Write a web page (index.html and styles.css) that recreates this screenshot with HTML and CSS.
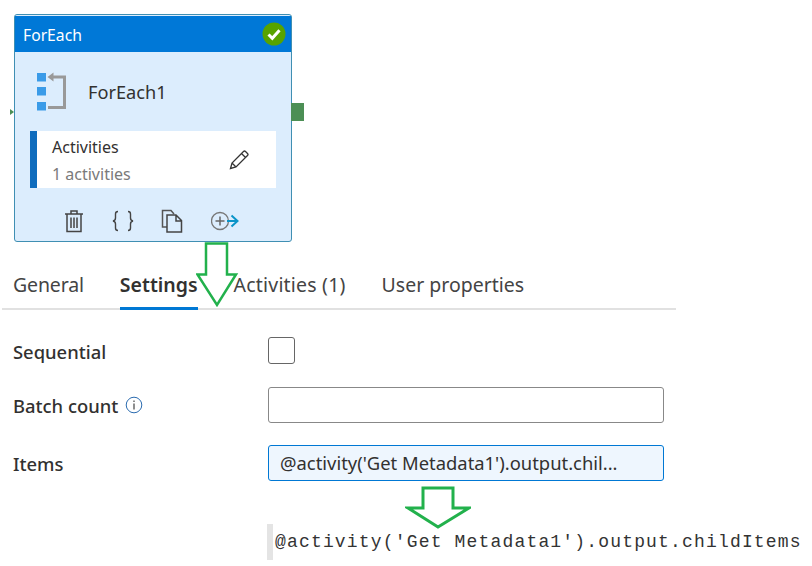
FILE: index.html
```html
<!DOCTYPE html>
<html lang="en">
<head>
    <meta charset="UTF-8">
    <meta name="viewport" content="width=device-width, initial-scale=1.0">
    <title>ForEach Settings</title>
    <link rel="stylesheet" href="styles.css">
</head>
<body>

    <div class="canvas">
        <div class="node">
            <span class="port-in"></span>
            <span class="port-out"></span>
            <div class="node-head">
                <span>ForEach</span>
                <svg class="status" width="24" height="24" viewBox="0 0 24 24">
                    <circle cx="12" cy="12" r="11.5" fill="#57a300"/>
                    <path d="M6.5 12.5l3.8 3.8 7.2-8" fill="none" stroke="#fff" stroke-width="3"/>
                </svg>
            </div>
            <div class="node-title">
                <svg width="30" height="40" viewBox="0 0 30 40">
                    <rect x="0" y="1" width="9" height="8.5" fill="#3a9be8"/>
                    <rect x="0" y="15" width="9" height="8.5" fill="#3a9be8"/>
                    <rect x="0" y="30" width="9" height="8.5" fill="#3a9be8"/>
                    <path d="M16 5H27.500V35.500H11" fill="none" stroke="#999" stroke-width="3"/>
                    <path d="M10.500 5l6-4.500v9z" fill="#999"/>
                </svg>
                <span>ForEach1</span>
            </div>
            <div class="node-panel">
                <div class="panel-text">
                    <div class="panel-name">Activities</div>
                    <div class="panel-count">1 activities</div>
                </div>
                <svg width="20" height="20" viewBox="0 0 20 20">
                    <path d="M1.500 18.500l1.500-5.500L14.500 1.500q1-1 2 0l2 2q1 1 0 2L7 17zM3 13l4 4M12.500 3.500l4 4" fill="none" stroke="#333" stroke-width="1.300"/>
                </svg>
            </div>
            <div class="node-tools">
                <svg width="20" height="24" viewBox="0 0 20 24">
                    <path d="M1 5H19M7 5V2h6v3M3 5V22.500H17V5M7 8.500V19M10 8.500V19M13 8.500V19" fill="none" stroke="#444" stroke-width="1.500"/>
                </svg>
                <svg width="22" height="24" viewBox="0 0 22 24">
                    <path d="M6 2.500q-2.500 0-2.500 2.500v4q0 2.500-2.500 3 2.500.5 2.500 3v4q0 2.500 2.500 2.500M16 2.500q2.500 0 2.500 2.500v4q0 2.500 2.500 3-2.500.5-2.500 3v4q0 2.500-2.500 2.500" fill="none" stroke="#444" stroke-width="1.400"/>
                </svg>
                <svg width="22" height="24" viewBox="0 0 22 24">
                    <path d="M6 18H1.500V1.500H10L13 5" fill="none" stroke="#555" stroke-width="1.500"/>
                    <path d="M6 6H15L20.500 11.500V23H6zM15 6v6h5.500" fill="#dcedfd" stroke="#444" stroke-width="1.500"/>
                </svg>
                <svg width="30" height="20" viewBox="1 0 30 20">
                    <circle cx="10" cy="10" r="8.500" fill="none" stroke="#777" stroke-width="1.300"/>
                    <path d="M5.500 10h9M10 5.500v9" stroke="#666" stroke-width="1.500"/>
                    <path d="M17 10H28M21.500 4.500l6 5.500-6 5.500" fill="none" stroke="#0a94c8" stroke-width="2"/>
                </svg>
            </div>
        </div>
    </div>

    <div class="tabs">
        <div class="tab">General</div>
        <div class="tab active">Settings</div>
        <div class="tab">Activities (1)</div>
        <div class="tab">User properties</div>
    </div>

    <div class="form">
        <label class="label">Sequential</label>
        <div class="checkbox"></div>
        <label class="label">Batch count
            <svg class="info" width="18" height="18" viewBox="0 0 18 18">
                <circle cx="9" cy="9" r="7.800" fill="none" stroke="#2b6cb0" stroke-width="1"/>
                <path d="M9 7.500v6M9 4.500v1.400" stroke="#444" stroke-width="1.200"/>
            </svg>
        </label>
        <div class="input"></div>
        <label class="label">Items</label>
        <div class="input filled">@activity('Get Metadata1').output.chil...</div>
    </div>

    <div class="code">@activity('Get Metadata1').output.childItems</div>

    <!-- green arrows drawn over the screenshot -->
    <svg class="arrow arrow-tabs" width="44" height="66" viewBox="0 0 44 66">
        <path d="M10 1.500H31V32.500H40L21 63 1.500 32.500H10z" fill="none" stroke="#22b14c" stroke-width="2.500"/>
    </svg>
    <svg class="arrow arrow-code" width="66" height="44" viewBox="0 0 66 44">
        <path d="M18 2H48V22H64L33 41 3 22H18z" fill="none" stroke="#22b14c" stroke-width="3"/>
    </svg>

</body>
</html>
```

FILE: styles.css
```css
html, body { margin: 0; padding: 0; }
body { position: relative; width: 812px; height: 566px; overflow: hidden; background: #fff; font-family: "Noto Sans", "Open Sans", sans-serif; color: #323130; }

.canvas { padding: 14px 0 0 14px; }
.node { position: relative; box-sizing: border-box; width: 278px; height: 228px; background: #dcedfd; border: 1px solid #3f8fb3; border-radius: 3px; }
.port-in { position: absolute; left: -5px; top: 94px; border-left: 4px solid #4c8f55; border-top: 3px solid transparent; border-bottom: 3px solid transparent; }
.port-out { position: absolute; left: 276px; top: 88px; width: 13px; height: 18px; background: #4c8f55; }

.node-head { display: flex; align-items: center; justify-content: space-between; box-sizing: border-box; height: 36px; margin-top: 1px; padding: 1px 5px 0 8px; background: #0078d7; color: #fff; font-size: 15.7px; }
.status { margin-top: -1px; }
.node-title { display: flex; align-items: center; gap: 21px; padding: 20px 0 0 22px; font-size: 18.2px; height: 60px; box-sizing: border-box; }
.node-panel { display: flex; align-items: center; justify-content: space-between; box-sizing: border-box; width: 246px; height: 57px; margin: 19px 0 0 15px; padding: 0 27px 0 15px; background: #fff; border-left: 7px solid #0f6cbd; }
.panel-text { padding-top: 2px; }
.panel-name { font-size: 16px; line-height: 26px; color: #323130; }
.panel-count { font-size: 16px; line-height: 28px; color: #7a7a7a; }
.node-tools { display: flex; align-items: center; height: 24px; gap: 27.5px; padding: 21px 0 0 49px; }

.tabs { display: flex; gap: 36px; height: 38px; margin: 28px 0 0 2px; padding-left: 11px; width: 663px; border-bottom: 2px solid #e1e1e1; }
.tab { box-sizing: border-box; height: 40px; font-size: 19.5px; line-height: 30px; color: #444; }
.tab:first-child { letter-spacing: -0.15px; }
.tab:nth-child(3) { letter-spacing: 0.2px; }
.tab.active { font-weight: 600; color: #323130; border-bottom: 3px solid #0078d4; }

.form { display: grid; grid-template-columns: 255px 396px; grid-template-rows: 28px 36px 36px; row-gap: 22px; align-items: center; margin: 27px 0 0 13px; }
.label { font-size: 18.4px; font-weight: 500; color: #323130; display: flex; align-items: center; gap: 7px; }
.checkbox { box-sizing: border-box; align-self: start; width: 27px; height: 27px; border: 1px solid #666; border-radius: 3px; }
.input { box-sizing: border-box; height: 36px; padding: 0 11px; border: 1px solid #888; border-radius: 3px; font-size: 18.4px; line-height: 34px; white-space: nowrap; overflow: hidden; }
.input.filled { background: #eef6fe; border-color: #0078d4; color: #323130; }

.code { box-sizing: border-box; height: 36px; margin: 43px 0 0 267px; padding-left: 2px; border-left: 6px solid #e4e4e4; font-family: "Liberation Mono", monospace; font-size: 18px; letter-spacing: 1.170px; line-height: 36px; color: #333; white-space: nowrap; }

.arrow { position: absolute; }
.arrow-tabs { left: 196px; top: 242px; }
.arrow-code { left: 405px; top: 486px; }
```
